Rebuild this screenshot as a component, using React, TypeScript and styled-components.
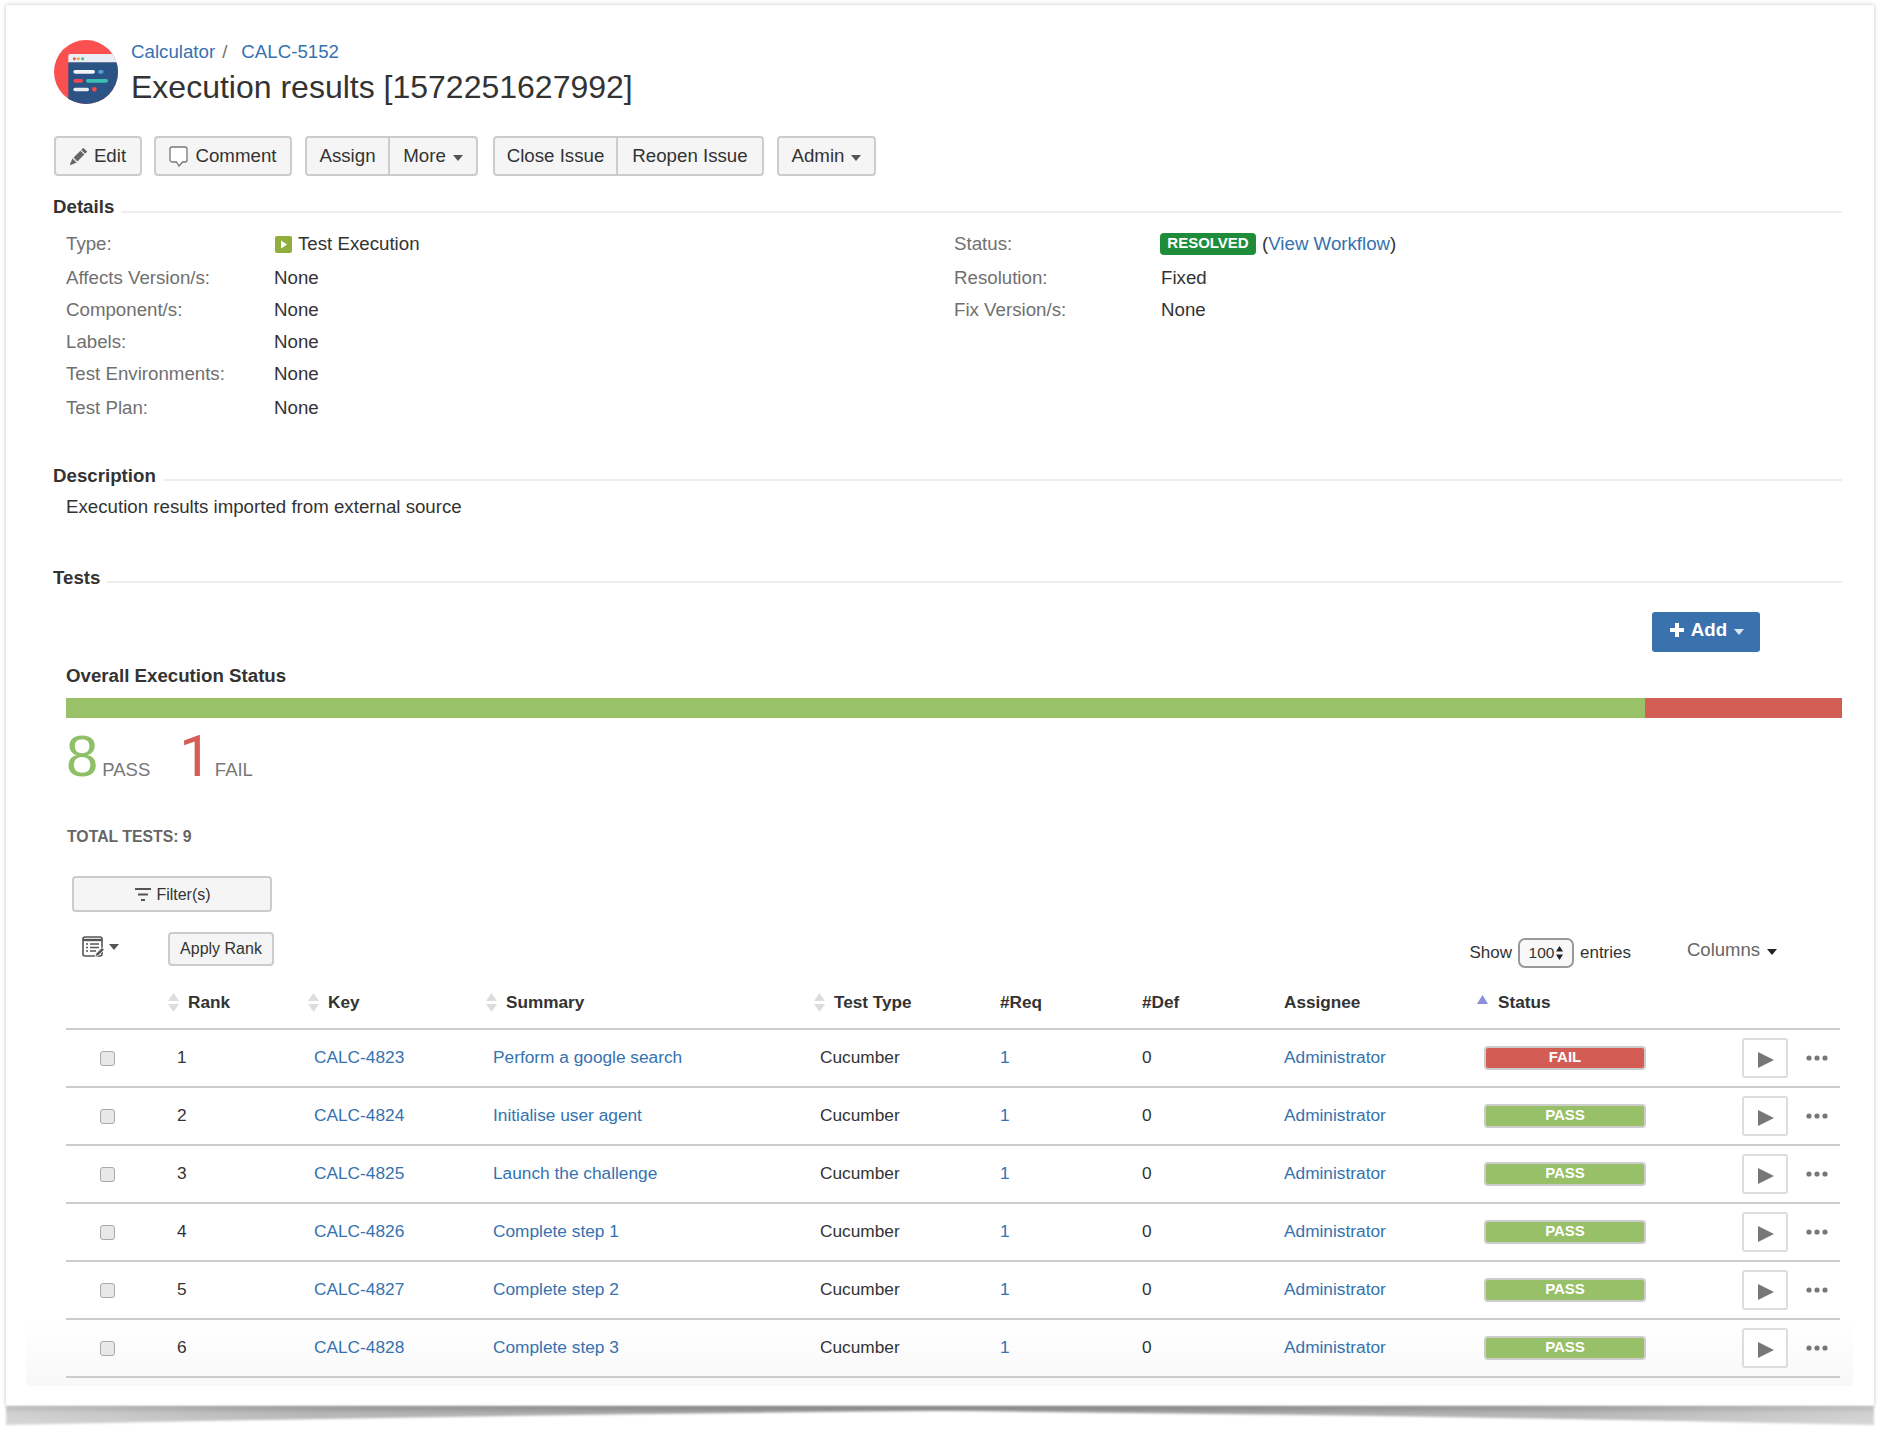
import { FC } from "react"
import styled, { createGlobalStyle } from "styled-components"
import { BsPencilFill } from "react-icons/bs"

const GlobalStyle = createGlobalStyle`
  html, body {
    margin: 0;
    padding: 0;
    background: #fff;
  }
  body {
    font-family: "Liberation Sans", Arial, sans-serif;
    color: #333;
  }
  * {
    box-sizing: border-box;
  }
`

const Page = styled.div`
  position: relative;
  width: 1888px;
  height: 1435px;
  overflow: hidden;
  background: #fff;
`

const Card = styled.div`
  position: absolute;
  left: 6px;
  top: 5px;
  width: 1868px;
  height: 1401px;
  padding: 35px 32px 0 48px;
  background: #fff;
  box-shadow: 0 0 4px rgba(0, 0, 0, 0.25);
`

const BottomFade = styled.div`
  position: absolute;
  left: 20px;
  width: 1827px;
  top: 1315px;
  height: 66px;
  background: linear-gradient(to bottom, #fff, #f8f8f8);
`

const Content = styled.div`
  position: relative;
`

const CurledShadow = styled.svg`
  position: absolute;
  left: 0;
  top: 1402px;
`

const Header = styled.header`
  display: flex;
  height: 64px;
`

const HeaderText = styled.div`
  margin-left: 13px;
`

const Breadcrumb = styled.div`
  font-size: 18.7px;
  line-height: 24px;
  color: #707070;
`

const Link = styled.a`
  color: #3572b0;
  text-decoration: none;
`

const BreadcrumbGap = styled.span`
  margin: 0 14px 0 7px;
`

const Title = styled.h1`
  margin: 0;
  font-size: 32px;
  font-weight: 400;
  line-height: 46px;
  color: #333;
  white-space: nowrap;
`

const Toolbar = styled.div`
  display: flex;
  height: 40px;
  margin-top: 32px;
`

const ButtonGroup = styled.div<{ $gap?: number }>`
  display: flex;
  margin-left: ${({ $gap }) => $gap ?? 0}px;
`

const Button = styled.button<{ $w: number; $joined?: "left" | "right" }>`
  display: flex;
  align-items: center;
  justify-content: center;
  width: ${({ $w }) => $w}px;
  height: 40px;
  padding: 0;
  font-family: inherit;
  font-size: 18.7px;
  color: #333;
  background: #f5f5f5;
  border: 2px solid #ccc;
  border-radius: ${({ $joined }) =>
    $joined === "left"
      ? "4px 0 0 4px"
      : $joined === "right"
        ? "0 4px 4px 0"
        : "4px"};
  ${({ $joined }) => $joined === "right" && "border-left: 0;"}
`

const Caret = styled.span<{ $color?: string }>`
  display: inline-block;
  width: 0;
  height: 0;
  margin-left: 7px;
  margin-top: 4px;
  border-left: 5px solid transparent;
  border-right: 5px solid transparent;
  border-top: 6px solid ${({ $color }) => $color ?? "#555"};
`

const SectionHeader = styled.div<{ $top: number }>`
  display: flex;
  align-items: center;
  height: 24px;
  margin-top: ${({ $top }) => $top}px;
`

const SectionTitle = styled.h3`
  margin: 0 7px 0 -1px;
  font-size: 18.7px;
  font-weight: 700;
  line-height: 24px;
  color: #333;
`

const SectionRule = styled.div<{ $drop: number }>`
  flex: 1;
  height: 2px;
  margin-top: ${({ $drop }) => $drop}px;
  background: #eee;
`

const DetailGrid = styled.div`
  display: flex;
  height: 205px;
  padding-left: 12px;
`

const DetailColumn = styled.div<{ $w: number }>`
  width: ${({ $w }) => $w}px;
  padding-top: 9px;
`

const DetailRow = styled.div<{ $tall?: boolean }>`
  display: flex;
  align-items: center;
  height: 32px;
  margin-top: ${({ $tall }) => ($tall ? 2 : 0)}px;
  font-size: 18.7px;
`

const DetailLabel = styled.div<{ $w: number }>`
  width: ${({ $w }) => $w}px;
  color: #707070;
`

const DetailValue = styled.div`
  display: flex;
  align-items: center;
  color: #333;
`

const TypeIcon = styled.svg`
  margin: 0 6px 0 1px;
`

const StatusLozenge = styled.span`
  display: inline-block;
  width: 96px;
  height: 22px;
  margin: 0 6px 0 -1px;
  font-size: 15px;
  font-weight: 700;
  line-height: 19px;
  text-align: center;
  color: #fff;
  background: #1f8c3a;
  border-radius: 4px;
`

const DescriptionText = styled.div`
  margin-top: 7px;
  padding-left: 12px;
  font-size: 18.7px;
  line-height: 24px;
`

const AddRow = styled.div`
  display: flex;
  justify-content: flex-end;
  margin-top: 22px;
  padding-right: 82px;
`

const AddButton = styled.button`
  display: flex;
  align-items: center;
  justify-content: center;
  width: 108px;
  height: 40px;
  padding: 0 0 4px 2px;
  font-family: inherit;
  font-size: 18.7px;
  font-weight: 700;
  color: #fff;
  background: #3a72ae;
  border: 0;
  border-radius: 3px;
`

const AddPlus = styled.svg`
  margin-right: 7px;
`

const OverallTitle = styled.div`
  margin: 12px 0 0 12px;
  font-size: 18.7px;
  font-weight: 700;
  line-height: 24px;
`

const ProgressBar = styled.div`
  display: flex;
  height: 20px;
  margin: 10px 0 0 12px;
`

const ProgressPart = styled.div<{ $color: string; $grow: number }>`
  flex: ${({ $grow }) => $grow};
  background: ${({ $color }) => $color};
`

const Counts = styled.div`
  display: flex;
  align-items: baseline;
  height: 60px;
  margin: 8px 0 0 12px;
`

const CountNumber = styled.span<{ $color: string }>`
  font-size: 58px;
  line-height: 60px;
  color: ${({ $color }) => $color};
`

const FailNumber = styled(CountNumber)`
  margin-left: 29px;
  font-family: Roboto, "Liberation Sans", sans-serif;
`

const CountLabel = styled.span<{ $left: number }>`
  margin-left: ${({ $left }) => $left}px;
  font-size: 18.5px;
  color: #777;
`

const TotalTests = styled.div`
  margin: 39px 0 0 13px;
  font-size: 15.8px;
  font-weight: 700;
  line-height: 24px;
  color: #666;
`

const FilterButton = styled.button`
  display: flex;
  align-items: center;
  justify-content: center;
  width: 200px;
  height: 36px;
  margin: 27px 0 0 18px;
  padding: 2px 0 0 2px;
  font-family: inherit;
  font-size: 16px;
  color: #333;
  background: #f5f5f5;
  border: 2px solid #ccc;
  border-radius: 4px;
`

const FilterIcon = styled.svg`
  margin-right: 5px;
`

const Controls = styled.div`
  display: flex;
  height: 40px;
  margin-top: 20px;
`

const RankMenu = styled.div`
  display: flex;
  align-items: flex-start;
  width: 86px;
  margin: 4px 0 0 28px;
`

const RankCaret = styled(Caret)`
  margin-left: 4px;
  margin-top: 8px;
`

const ApplyRank = styled.button`
  width: 106px;
  height: 34px;
  padding: 0;
  font-family: inherit;
  font-size: 16px;
  color: #333;
  background: #f5f5f5;
  border: 2px solid #ccc;
  border-radius: 4px;
`

const LengthControl = styled.div`
  display: flex;
  align-items: center;
  height: 30px;
  margin: 6px 0 0 auto;
  font-size: 17px;
  color: #333;
`

const LengthSelect = styled.div`
  display: flex;
  align-items: center;
  justify-content: center;
  width: 56px;
  height: 30px;
  margin: 0 6px;
  font-size: 15.5px;
  background: #f8f8f8;
  border: 2px solid #999;
  border-radius: 7px;
`

const UpDown = styled.svg`
  margin-left: 2px;
`

const ColumnsToggle = styled.div`
  display: flex;
  align-items: center;
  height: 24px;
  margin: 6px 65px 0 56px;
  font-size: 18.5px;
  color: #666;
`

const ColumnsCaret = styled(Caret)`
  margin-left: 7px;
  border-top-color: #222;
`

const columns = "111px 137px 179px 327px 180px 142px 142px 200px 258px 64px 34px"

const TableHead = styled.div`
  position: relative;
  width: 1774px;
  height: 58px;
  margin-left: 12px;
  border-bottom: 2px solid #ccc;
`

const HeadCell = styled.div<{ $x: number }>`
  position: absolute;
  left: ${({ $x }) => $x}px;
  top: 18px;
  display: flex;
  align-items: center;
  height: 24px;
  font-size: 17.2px;
  font-weight: 700;
  color: #333;
`

const SortIcon = styled.svg`
  margin-right: 9px;
`

const SortedIcon = styled.svg`
  margin: -5px 10px 0 0;
`

const Row = styled.div`
  display: grid;
  grid-template-columns: ${columns};
  align-items: center;
  width: 1774px;
  height: 58px;
  margin-left: 12px;
  padding-top: 5px;
  font-size: 17.3px;
  color: #333;
  border-bottom: 2px solid #ccc;
`

const CheckCell = styled.div`
  padding-left: 34px;
`

const RowCheck = styled.input`
  display: block;
  width: 15px;
  height: 15px;
  margin: 1px 0 0;
  appearance: none;
  background: #e8e8e8;
  border: 1.5px solid #aaa;
  border-radius: 3px;
`

const ResultBadge = styled.div<{ $fail: boolean }>`
  width: 162px;
  height: 24px;
  font-size: 15px;
  font-weight: 700;
  line-height: 18px;
  text-align: center;
  color: #fff;
  background: ${({ $fail }) => ($fail ? "#d35c54" : "#97c068")};
  border: 2px solid #ccc;
  border-radius: 4px;
`

const PlayButton = styled.button`
  display: flex;
  align-items: center;
  justify-content: center;
  width: 46px;
  height: 40px;
  padding: 4px 0 0 2px;
  background: #fff;
  border: 2px solid #ddd;
  border-radius: 3px;
`

const MoreDots = styled.svg`
  display: block;
`

const EditIcon = styled(BsPencilFill)`
  margin-right: 7px;
  color: #666;
`

const CommentGlyph = styled.svg`
  margin-right: 7px;
`

const Logo: FC = () => (
  <svg width="64" height="64" viewBox="42 30 192 192">
    <defs>
      <clipPath id="logo-circle">
        <circle cx="138" cy="126" r="96" />
      </clipPath>
    </defs>
    <g clipPath="url(#logo-circle)">
      <rect x="40" y="28" width="196" height="196" fill="#fb5050" />
      <path d="M85 78a6 6 0 0 1 6-6h145v26H85z" fill="#e9eef6" />
      <rect x="85" y="97" width="151" height="127" fill="#2c5385" />
    </g>
    <circle cx="103" cy="86" r="4.5" fill="#f2524f" />
    <circle cx="115" cy="86" r="4.5" fill="#f3a63b" />
    <circle cx="128" cy="86" r="4.5" fill="#3cc47a" />
    <rect x="100" y="120" width="65" height="11" rx="5.5" fill="#f2f5f9" />
    <rect x="174" y="120" width="17" height="11" rx="5.5" fill="#4f9fd8" />
    <rect x="100" y="147" width="29" height="11" rx="5.5" fill="#f2484f" />
    <rect x="138" y="147" width="66" height="11" rx="5.5" fill="#3bbfb5" />
    <rect x="100" y="173" width="47" height="11" rx="5.5" fill="#e9eef6" />
    <circle cx="163" cy="178" r="7" fill="#f2484f" />
  </svg>
)

const CommentIcon: FC = () => (
  <CommentGlyph width="19" height="21" viewBox="0 0 19 21">
    <path
      d="M3 1h13a2 2 0 0 1 2 2v11a2 2 0 0 1-2 2h-2.5L10 20l-2.5-4H3a2 2 0 0 1-2-2V3a2 2 0 0 1 2-2z"
      fill="#fff"
      stroke="#777"
      strokeWidth="1.3"
    />
  </CommentGlyph>
)

const SortArrows: FC = () => (
  <SortIcon width="11" height="19" viewBox="0 0 11 19">
    <path d="M5.5 0L11 8H0zM0 11h11l-5.5 8z" fill="#ddd" />
  </SortIcon>
)

const TableEditIcon: FC = () => (
  <svg width="23" height="22" viewBox="0 0 23 22">
    <rect x="1" y="1" width="19" height="19" rx="2" fill="none" stroke="#555" strokeWidth="1.6" />
    <path d="M1 4h19" stroke="#555" strokeWidth="2.4" />
    <path d="M4 8h2M4 11.5h2M4 15h2M8 8h9M8 11.5h9M8 15h6" stroke="#555" strokeWidth="1.4" />
    <path d="M13 20.5l1-3 6-6 2.2 2.2-6 6z" fill="#555" stroke="#fff" strokeWidth="0.8" />
  </svg>
)

const DetailLine: FC<{
  label: string
  labelWidth: number
  value?: string
  tall?: boolean
  children?: React.ReactNode
}> = ({ label, labelWidth, value, tall, children }) => (
  <DetailRow $tall={tall}>
    <DetailLabel $w={labelWidth}>{label}</DetailLabel>
    <DetailValue>{children ?? value}</DetailValue>
  </DetailRow>
)

const tests = [
  { rank: 1, key: "CALC-4823", summary: "Perform a google search", status: "FAIL" },
  { rank: 2, key: "CALC-4824", summary: "Initialise user agent", status: "PASS" },
  { rank: 3, key: "CALC-4825", summary: "Launch the challenge", status: "PASS" },
  { rank: 4, key: "CALC-4826", summary: "Complete step 1", status: "PASS" },
  { rank: 5, key: "CALC-4827", summary: "Complete step 2", status: "PASS" },
  { rank: 6, key: "CALC-4828", summary: "Complete step 3", status: "PASS" },
]

const App: FC = () => (
  <Page>
    <GlobalStyle />
    <Card>
      <BottomFade />
      <Content>
        <Header>
          <Logo />
          <HeaderText>
            <Breadcrumb>
              <Link>Calculator</Link>
              <BreadcrumbGap>/</BreadcrumbGap>
              <Link>CALC-5152</Link>
            </Breadcrumb>
            <Title>Execution results [1572251627992]</Title>
          </HeaderText>
        </Header>

        <Toolbar>
          <ButtonGroup>
            <Button $w={88}>
              <EditIcon size={17} />
              Edit
            </Button>
          </ButtonGroup>
          <ButtonGroup $gap={12}>
            <Button $w={138}>
              <CommentIcon />
              Comment
            </Button>
          </ButtonGroup>
          <ButtonGroup $gap={13}>
            <Button $w={85} $joined="left">Assign</Button>
            <Button $w={88} $joined="right">
              More
              <Caret />
            </Button>
          </ButtonGroup>
          <ButtonGroup $gap={15}>
            <Button $w={125} $joined="left">Close Issue</Button>
            <Button $w={146} $joined="right">Reopen Issue</Button>
          </ButtonGroup>
          <ButtonGroup $gap={13}>
            <Button $w={99}>
              Admin
              <Caret />
            </Button>
          </ButtonGroup>
        </Toolbar>

        <SectionHeader $top={19}>
          <SectionTitle>Details</SectionTitle>
          <SectionRule $drop={10} />
        </SectionHeader>
        <DetailGrid>
          <DetailColumn $w={888}>
            <DetailLine label="Type:" labelWidth={208}>
              <TypeIcon width="17" height="17" viewBox="0 0 17 17">
                <rect width="17" height="17" rx="2" fill="#8fae3c" />
                <path d="M6 4.5l6 4-6 4z" fill="#fff" />
              </TypeIcon>
              Test Execution
            </DetailLine>
            <DetailLine label="Affects Version/s:" value="None" labelWidth={208} tall />
            <DetailLine label="Component/s:" value="None" labelWidth={208} />
            <DetailLine label="Labels:" value="None" labelWidth={208} />
            <DetailLine label="Test Environments:" value="None" labelWidth={208} />
            <DetailLine label="Test Plan:" value="None" labelWidth={208} tall />
          </DetailColumn>
          <DetailColumn $w={800}>
            <DetailLine label="Status:" labelWidth={207}>
              <StatusLozenge>RESOLVED</StatusLozenge>
              <span>
                (<Link>View Workflow</Link>)
              </span>
            </DetailLine>
            <DetailLine label="Resolution:" value="Fixed" labelWidth={207} tall />
            <DetailLine label="Fix Version/s:" value="None" labelWidth={207} />
          </DetailColumn>
        </DetailGrid>

        <SectionHeader $top={40}>
          <SectionTitle>Description</SectionTitle>
          <SectionRule $drop={8} />
        </SectionHeader>
        <DescriptionText>Execution results imported from external source</DescriptionText>

        <SectionHeader $top={47}>
          <SectionTitle>Tests</SectionTitle>
          <SectionRule $drop={8} />
        </SectionHeader>
        <AddRow>
          <AddButton>
            <AddPlus width="14" height="14" viewBox="0 0 14 14">
              <path d="M5 0h4v5h5v4H9v5H5V9H0V5h5z" fill="#fff" />
            </AddPlus>
            Add
            <Caret $color="#dce6f1" />
          </AddButton>
        </AddRow>
        <OverallTitle>Overall Execution Status</OverallTitle>
        <ProgressBar>
          <ProgressPart $color="#99c268" $grow={8} />
          <ProgressPart $color="#d25e55" $grow={1} />
        </ProgressBar>
        <Counts>
          <CountNumber $color="#8fc068">8</CountNumber>
          <CountLabel $left={4}>PASS</CountLabel>
          <FailNumber $color="#d55d55">1</FailNumber>
          <CountLabel $left={3}>FAIL</CountLabel>
        </Counts>
        <TotalTests>TOTAL TESTS: 9</TotalTests>
        <FilterButton>
          <FilterIcon width="16" height="14" viewBox="0 0 16 14">
            <path d="M0 1h16M3 6.5h10M6 12h4" stroke="#555" strokeWidth="2" />
          </FilterIcon>
          Filter(s)
        </FilterButton>

        <Controls>
          <RankMenu>
            <TableEditIcon />
            <RankCaret />
          </RankMenu>
          <ApplyRank>Apply Rank</ApplyRank>
          <LengthControl>
            Show
            <LengthSelect>
              100
              <UpDown width="7" height="14" viewBox="0 0 7 14">
                <path d="M3.5 0L7 5.5H0zM0 8.5h7L3.5 14z" fill="#222" />
              </UpDown>
            </LengthSelect>
            entries
          </LengthControl>
          <ColumnsToggle>
            Columns
            <ColumnsCaret />
          </ColumnsToggle>
        </Controls>

        <TableHead>
          <HeadCell $x={102}><SortArrows />Rank</HeadCell>
          <HeadCell $x={242}><SortArrows />Key</HeadCell>
          <HeadCell $x={420}><SortArrows />Summary</HeadCell>
          <HeadCell $x={748}><SortArrows />Test Type</HeadCell>
          <HeadCell $x={934}>#Req</HeadCell>
          <HeadCell $x={1076}>#Def</HeadCell>
          <HeadCell $x={1218}>Assignee</HeadCell>
          <HeadCell $x={1411}>
            <SortedIcon width="11" height="9" viewBox="0 0 11 9">
              <path d="M5.5 0L11 9H0z" fill="#8a8fdc" />
            </SortedIcon>
            Status
          </HeadCell>
        </TableHead>
        {tests.map(test => (
          <Row key={test.key}>
            <CheckCell>
              <RowCheck type="checkbox" />
            </CheckCell>
            <div>{test.rank}</div>
            <Link>{test.key}</Link>
            <Link>{test.summary}</Link>
            <div>Cucumber</div>
            <Link>1</Link>
            <div>0</div>
            <Link>Administrator</Link>
            <ResultBadge $fail={test.status === "FAIL"}>{test.status}</ResultBadge>
            <PlayButton>
              <svg width="16" height="16" viewBox="0 0 16 16">
                <path d="M0 0l16 8-16 8z" fill="#777" />
              </svg>
            </PlayButton>
            <MoreDots width="22" height="6" viewBox="0 0 22 6">
              <circle cx="3" cy="3" r="2.6" fill="#777" />
              <circle cx="11" cy="3" r="2.6" fill="#777" />
              <circle cx="19" cy="3" r="2.6" fill="#777" />
            </MoreDots>
            <div />
          </Row>
        ))}
      </Content>
    </Card>
    <CurledShadow width="1888" height="33" viewBox="0 0 1888 33">
      <defs>
        <linearGradient id="curl-shade" x1="0" x2="1" y1="0" y2="0">
          <stop offset="0" stopColor="#bcbcbc" />
          <stop offset="0.16" stopColor="#969696" />
          <stop offset="0.4" stopColor="#808080" />
          <stop offset="0.6" stopColor="#808080" />
          <stop offset="0.84" stopColor="#969696" />
          <stop offset="1" stopColor="#bcbcbc" />
        </linearGradient>
        <linearGradient id="curl-fade" gradientUnits="userSpaceOnUse" x1="0" x2="0" y1="4" y2="26">
          <stop offset="0" stopColor="#fff" />
          <stop offset="0.35" stopColor="#b0b0b0" />
          <stop offset="1" stopColor="#909090" />
        </linearGradient>
        <mask id="curl-mask" maskUnits="userSpaceOnUse" x="0" y="0" width="1888" height="33">
          <rect width="1888" height="33" fill="url(#curl-fade)" />
        </mask>
        <filter id="curl-blur">
          <feGaussianBlur stdDeviation="1" />
        </filter>
      </defs>
      <g mask="url(#curl-mask)">
        <path
          d="M6 4H1874V23Q1400 13 940 9Q480 13 6 23Z"
          fill="url(#curl-shade)"
          filter="url(#curl-blur)"
        />
      </g>
    </CurledShadow>
  </Page>
)

export default App
